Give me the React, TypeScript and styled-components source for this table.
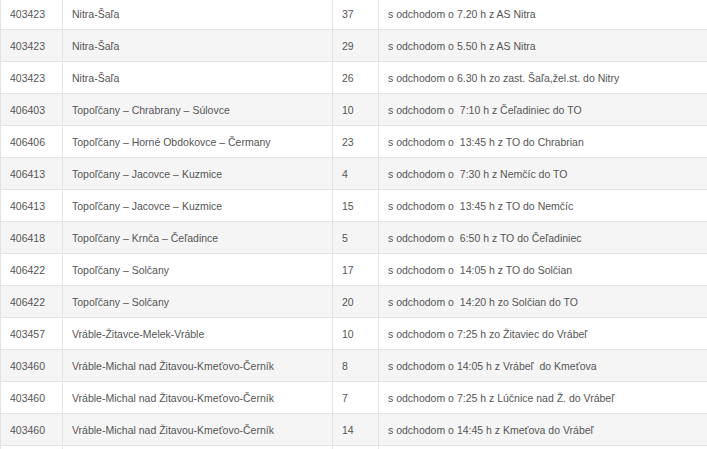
import React from 'react';
import styled, { createGlobalStyle } from 'styled-components';

const GlobalStyle = createGlobalStyle`
  html, body {
    margin: 0;
    padding: 0;
    background: #fff;
    overflow: hidden;
  }
`;

type Route = {
  line: string;
  name: string;
  conn: string;
  note: string;
};

const routes: Route[] = [
  { line: '403423', name: 'Nitra-Šaľa', conn: '37', note: 's odchodom o 7.20 h z AS Nitra' },
  { line: '403423', name: 'Nitra-Šaľa', conn: '29', note: 's odchodom o 5.50 h z AS Nitra' },
  { line: '403423', name: 'Nitra-Šaľa', conn: '26', note: 's odchodom o 6.30 h zo zast. Šaľa,žel.st. do Nitry' },
  { line: '406403', name: 'Topoľčany – Chrabrany – Súlovce', conn: '10', note: 's odchodom o  7:10 h z Čeľadiniec do TO' },
  { line: '406406', name: 'Topoľčany – Horné Obdokovce – Čermany', conn: '23', note: 's odchodom o  13:45 h z TO do Chrabrian' },
  { line: '406413', name: 'Topoľčany – Jacovce – Kuzmice', conn: '4', note: 's odchodom o  7:30 h z Nemčíc do TO' },
  { line: '406413', name: 'Topoľčany – Jacovce – Kuzmice', conn: '15', note: 's odchodom o  13:45 h z TO do Nemčíc' },
  { line: '406418', name: 'Topoľčany – Krnča – Čeľadince', conn: '5', note: 's odchodom o  6:50 h z TO do Čeľadiniec' },
  { line: '406422', name: 'Topoľčany – Solčany', conn: '17', note: 's odchodom o  14:05 h z TO do Solčian' },
  { line: '406422', name: 'Topoľčany – Solčany', conn: '20', note: 's odchodom o  14:20 h zo Solčian do TO' },
  { line: '403457', name: 'Vráble-Žitavce-Melek-Vráble', conn: '10', note: 's odchodom o 7:25 h zo Žitaviec do Vrábeľ' },
  { line: '403460', name: 'Vráble-Michal nad Žitavou-Kmeťovo-Černík', conn: '8', note: 's odchodom o 14:05 h z Vrábeľ  do Kmeťova' },
  { line: '403460', name: 'Vráble-Michal nad Žitavou-Kmeťovo-Černík', conn: '7', note: 's odchodom o 7:25 h z Lúčnice nad Ž. do Vrábeľ' },
  { line: '403460', name: 'Vráble-Michal nad Žitavou-Kmeťovo-Černík', conn: '14', note: 's odchodom o 14:45 h z Kmeťova do Vrábeľ' },
];

// the next row is scrolled below the fold; only its top border shows
const FILLER_ROWS = 1;

const Wrapper = styled.div`
  margin-top: -3px;
  width: 707px;
`;

const Table = styled.table`
  width: 707px;
  border-collapse: collapse;
  table-layout: fixed;
  font-family: 'Liberation Sans', Arial, sans-serif;
  font-size: 10.5px;
  color: #555;
`;

const Col = styled.col<{ $w: number }>`
  width: ${(p) => p.$w}px;
`;

const Row = styled.tr<{ $striped: boolean }>`
  background: ${(p) => (p.$striped ? '#f5f5f5' : '#fff')};
`;

const Cell = styled.td`
  height: 31px;
  padding: 0 0 0 9px;
  border: 1px solid #e4e4e4;
  white-space: pre;
  vertical-align: middle;
  line-height: 14px;
`;

const App: React.FC = () => {
  return (
    <>
      <GlobalStyle />
      <Wrapper>
        <Table>
          <colgroup>
            <Col $w={62} />
            <Col $w={270} />
            <Col $w={46} />
            <Col $w={329} />
          </colgroup>
          <tbody>
            {routes.map((r, i) => (
              <Row key={i} $striped={i % 2 === 1}>
                <Cell>{r.line}</Cell>
                <Cell>{r.name}</Cell>
                <Cell>{r.conn}</Cell>
                <Cell>{r.note}</Cell>
              </Row>
            ))}
            {Array.from({ length: FILLER_ROWS }).map((_, i) => (
              <Row key={'f' + i} $striped={(routes.length + i) % 2 === 1}>
                <Cell />
                <Cell />
                <Cell />
                <Cell />
              </Row>
            ))}
          </tbody>
        </Table>
      </Wrapper>
    </>
  );
};

export default App;
